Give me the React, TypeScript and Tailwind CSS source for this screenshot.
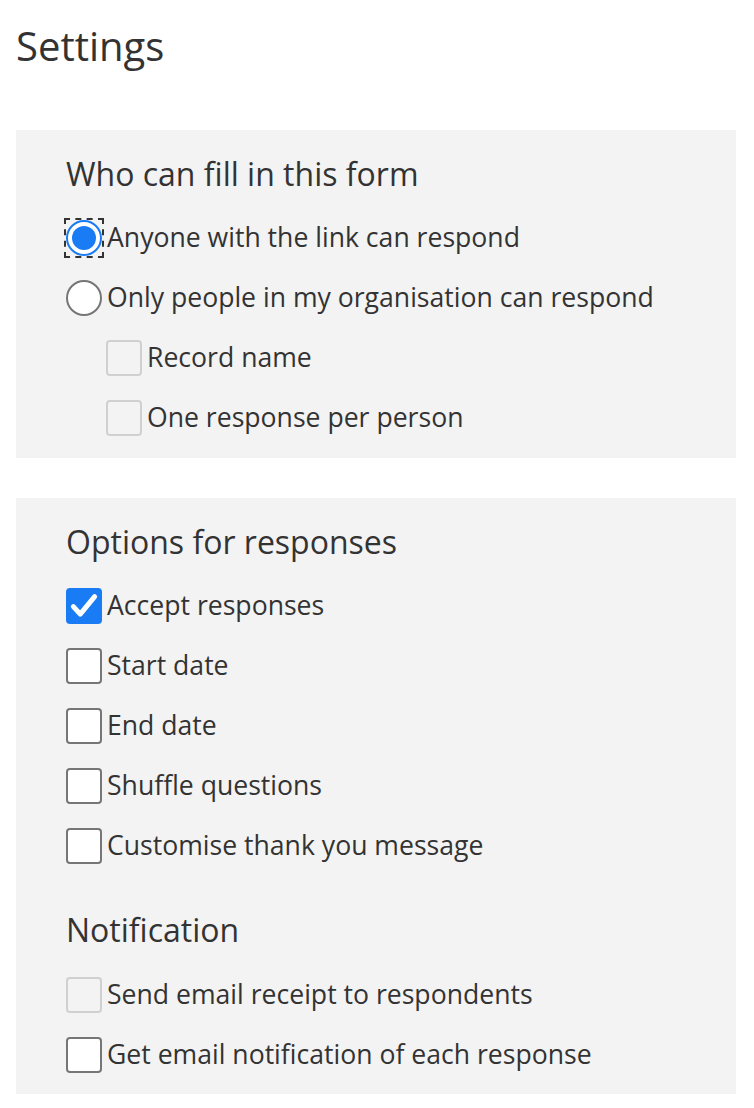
import React from 'react';

type Item = { label: string; state: 'checked' | 'empty' | 'disabled'; indent?: boolean };

const Radio = ({ selected }: { selected: boolean }) => (
  <div className={`relative flex-shrink-0 w-[36px] h-[36px] flex items-center justify-center`}>
    {selected && <div className="absolute -inset-[2px] border-2 border-dashed border-[#333]" />}
    <div
      className={`w-[36px] h-[36px] rounded-full bg-white flex items-center justify-center border-2 ${
        selected ? 'border-[#1a7cf5]' : 'border-[#767676]'
      }`}
    >
      {selected && <div className="w-[24px] h-[24px] rounded-full bg-[#1a7cf5]" />}
    </div>
  </div>
);

const Checkbox = ({ state }: { state: Item['state'] }) => {
  if (state === 'checked') {
    return (
      <div className="flex-shrink-0 w-[36px] h-[36px] rounded-[4px] bg-[#1a7cf5] flex items-center justify-center">
        <svg width="30" height="30" viewBox="0 0 24 24" fill="none">
          <path d="M3.5 12.5 L9 18.5 L20.5 4.5" stroke="white" strokeWidth="4" strokeLinecap="round" strokeLinejoin="round" />
        </svg>
      </div>
    );
  }
  return (
    <div
      className={`flex-shrink-0 w-[36px] h-[36px] rounded-[4px] border-2 ${
        state === 'disabled' ? 'border-[#d0d0d0] bg-[#f3f3f3]' : 'border-[#767676] bg-white'
      }`}
    />
  );
};

const Row = ({ children, indent }: { children: React.ReactNode; indent?: boolean }) => (
  <div className={`h-[60px] flex items-center gap-[5px] ${indent ? 'pl-[40px]' : ''}`}>{children}</div>
);

const Heading = ({ text }: { text: string }) => (
  <h2 className="h-[52px] flex items-center text-[32px] text-[#333]">{text}</h2>
);

const responseOptions: Item[] = [
  { label: 'Accept responses', state: 'checked' },
  { label: 'Start date', state: 'empty' },
  { label: 'End date', state: 'empty' },
  { label: 'Shuffle questions', state: 'empty' },
  { label: 'Customise thank you message', state: 'empty' },
];

const notificationOptions: Item[] = [
  { label: 'Send email receipt to respondents', state: 'disabled' },
  { label: 'Get email notification of each response', state: 'empty' },
];

const App = () => {
  return (
    <div
      className="min-h-screen bg-white text-[#333] pl-[16px] pr-[18px]"
      style={{ fontFamily: '"Open Sans", "Noto Sans", sans-serif' }}
    >
      <h1 className="h-[100px] pt-[18px] text-[40px] leading-[56px]">Settings</h1>

      {/* Who can fill in */}
      <section className="mt-[30px] bg-[#f3f3f3] pl-[50px] pt-[18px] pb-[10px]">
        <div className="pb-[8px]">
          <Heading text="Who can fill in this form" />
        </div>
        <div className="text-[26.6px]">
          <Row>
            <Radio selected />
            <span>Anyone with the link can respond</span>
          </Row>
          <Row>
            <Radio selected={false} />
            <span>Only people in my organisation can respond</span>
          </Row>
          <Row indent>
            <Checkbox state="disabled" />
            <span>Record name</span>
          </Row>
          <Row indent>
            <Checkbox state="disabled" />
            <span>One response per person</span>
          </Row>
        </div>
      </section>

      {/* Options */}
      <section className="mt-[40px] bg-[#f3f3f3] pl-[50px] pt-[18px] pb-[9px]">
        <div className="pb-[8px]">
          <Heading text="Options for responses" />
        </div>
        <div className="text-[26.6px]">
          {responseOptions.map((o) => (
            <Row key={o.label}>
              <Checkbox state={o.state} />
              <span>{o.label}</span>
            </Row>
          ))}
        </div>
        <div className="pt-[28px] pb-[9px]">
          <Heading text="Notification" />
        </div>
        <div className="text-[26.6px]">
          {notificationOptions.map((o) => (
            <Row key={o.label}>
              <Checkbox state={o.state} />
              <span>{o.label}</span>
            </Row>
          ))}
        </div>
      </section>
    </div>
  );
};

export default App;
